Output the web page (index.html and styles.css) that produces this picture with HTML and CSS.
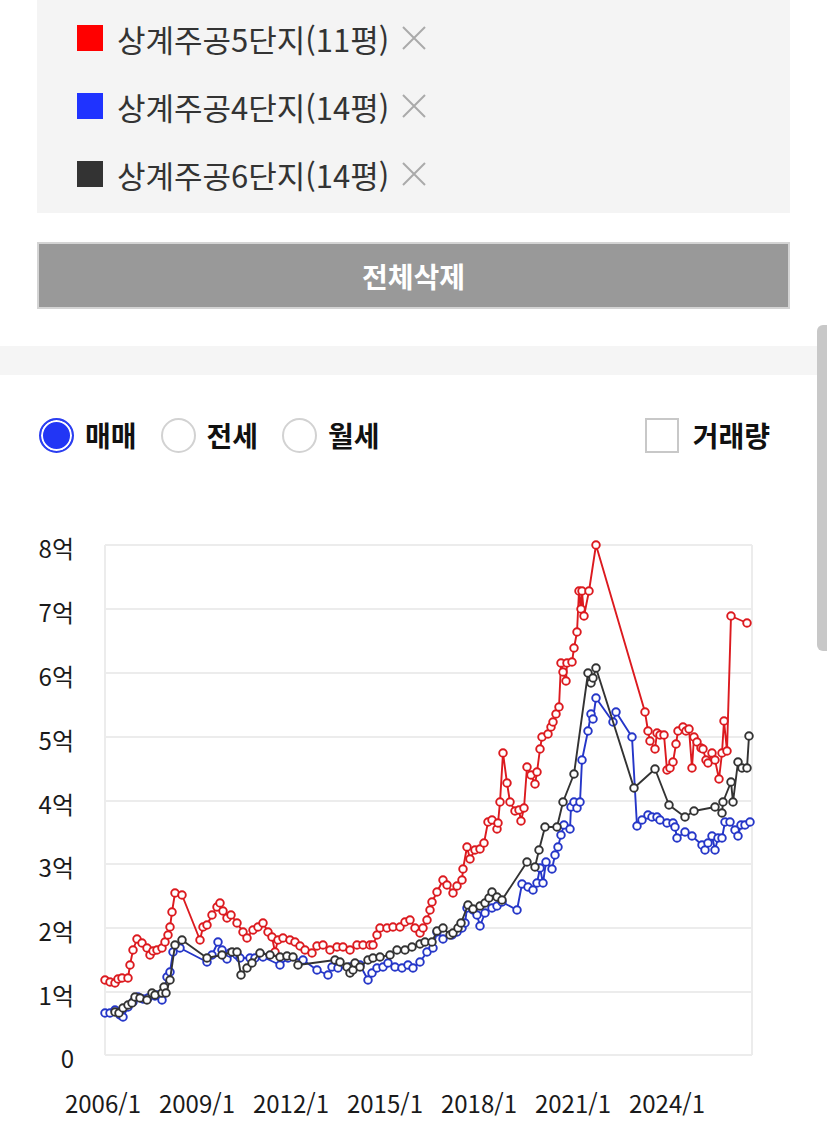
FILE: index.html
```html
<!DOCTYPE html>
<html lang="ko">
<head>
<meta charset="utf-8">
<title>시세 비교</title>
<link rel="stylesheet" href="styles.css">
</head>
<body>
<div class="filters">
  <ul class="picked">
    <li class="pick"><span class="swatch red"></span><span class="pick-name">상계주공5단지(11평)</span><button class="remove" type="button" aria-label="삭제"><svg viewBox="0 0 26 26" width="26" height="26"><path d="M2 2 L24 24 M24 2 L2 24"/></svg></button></li>
    <li class="pick"><span class="swatch blue"></span><span class="pick-name">상계주공4단지(14평)</span><button class="remove" type="button" aria-label="삭제"><svg viewBox="0 0 26 26" width="26" height="26"><path d="M2 2 L24 24 M24 2 L2 24"/></svg></button></li>
    <li class="pick"><span class="swatch dark"></span><span class="pick-name">상계주공6단지(14평)</span><button class="remove" type="button" aria-label="삭제"><svg viewBox="0 0 26 26" width="26" height="26"><path d="M2 2 L24 24 M24 2 L2 24"/></svg></button></li>
  </ul>
  <button class="clear-all" type="button">전체삭제</button>
</div>
<div class="divider"></div>
<section class="chart-panel">
  <div class="options">
    <div class="opt"><span class="radio checked"></span><span class="opt-label">매매</span></div>
    <div class="opt"><span class="radio"></span><span class="opt-label">전세</span></div>
    <div class="opt"><span class="radio"></span><span class="opt-label">월세</span></div>
    <div class="opt volume"><span class="checkbox"></span><span class="opt-label">거래량</span></div>
  </div>
  <svg class="chart" width="827" height="625" viewBox="0 500 827 625">
    <defs>
      <marker id="mr" viewBox="0 0 12 12" refX="6" refY="6" markerWidth="12" markerHeight="12" markerUnits="userSpaceOnUse"><circle cx="6" cy="6" r="3.8" fill="#fff" stroke="#dc1a1f" stroke-width="1.9"/></marker>
      <marker id="mb" viewBox="0 0 12 12" refX="6" refY="6" markerWidth="12" markerHeight="12" markerUnits="userSpaceOnUse"><circle cx="6" cy="6" r="3.8" fill="#fff" stroke="#2536c8" stroke-width="1.9"/></marker>
      <marker id="mk" viewBox="0 0 12 12" refX="6" refY="6" markerWidth="12" markerHeight="12" markerUnits="userSpaceOnUse"><circle cx="6" cy="6" r="3.8" fill="#fff" stroke="#333" stroke-width="1.9"/></marker>
    </defs>
    <g class="grid">
      <line x1="105" y1="545" x2="752" y2="545"/>
      <line x1="105" y1="609" x2="752" y2="609"/>
      <line x1="105" y1="673" x2="752" y2="673"/>
      <line x1="105" y1="737" x2="752" y2="737"/>
      <line x1="105" y1="801" x2="752" y2="801"/>
      <line x1="105" y1="864" x2="752" y2="864"/>
      <line x1="105" y1="928" x2="752" y2="928"/>
      <line x1="105" y1="992" x2="752" y2="992"/>
      <line x1="105" y1="1055" x2="752" y2="1055"/>
      <line x1="105" y1="545" x2="105" y2="1055"/>
      <line x1="752" y1="545" x2="752" y2="1055"/>
    </g>
    <g class="ylab">
      <text x="74" y="547">8억</text>
      <text x="74" y="611">7억</text>
      <text x="74" y="675">6억</text>
      <text x="74" y="739">5억</text>
      <text x="74" y="803">4억</text>
      <text x="74" y="866">3억</text>
      <text x="74" y="930">2억</text>
      <text x="74" y="994">1억</text>
      <text x="74" y="1057">0</text>
    </g>
    <g class="xlab">
      <text x="103" y="1102">2006/1</text>
      <text x="197" y="1102">2009/1</text>
      <text x="291" y="1102">2012/1</text>
      <text x="385" y="1102">2015/1</text>
      <text x="479" y="1102">2018/1</text>
      <text x="573" y="1102">2021/1</text>
      <text x="667" y="1102">2024/1</text>
    </g>
    <polyline class="series red" marker-start="url(#mr)" marker-mid="url(#mr)" marker-end="url(#mr)" points="105,980 110,982 115,983 118,979 122,978 128,978 130,965 133,950 137,939 142,943 147,948 150,955 153,951 157,950 162,948 165,942 168,935 170,927 172,912 175,893 182,895 200,940 203,927 207,925 212,915 217,907 220,903 223,911 227,918 231,915 237,923 243,932 247,938 253,930 258,927 263,923 268,932 272,937 275,952 278,940 283,938 290,940 295,942 300,946 305,950 312,953 317,946 323,945 330,950 337,947 343,947 350,950 357,945 363,945 370,945 373,945 377,935 380,928 387,928 393,927 400,927 405,922 410,920 415,928 420,933 423,928 427,920 430,910 432,902 437,892 443,880 447,885 453,893 457,886 462,880 463,869 467,847 470,859 475,850 480,849 484,843 488,822 492,820 497,829 498,823 500,802 503,753 507,783 510,802 515,811 519,810 521,821 524,808 527,767 531,775 535,784 537,772 540,749 542,737 548,734 551,727 553,722 556,714 559,707 561,663 563,672 566,681 567,663 572,662 574,648 577,632 579,591 581,609 582,591 584,616 589,591 596,545 645,712 648,731 650,741 655,749 657,733 660,735 664,735 667,770 670,768 673,762 676,744 678,731 683,727 686,731 689,729 692,768 694,737 697,742 701,748 703,749 706,760 708,763 712,753 715,760 719,779 722,753 724,721 727,751 731,616 747,623"/>
    <polyline class="series blue" marker-start="url(#mb)" marker-mid="url(#mb)" marker-end="url(#mb)" points="105,1013 110,1013 115,1010 120,1015 123,1017 128,1007 133,1002 138,997 143,999 148,998 155,996 158,995 162,1000 167,977 170,972 173,952 180,948 207,962 212,955 218,942 222,950 227,959 230,953 237,955 240,958 250,958 255,958 263,957 280,965 288,958 303,960 317,970 328,975 332,967 338,968 350,967 360,965 368,980 372,973 377,968 383,967 388,963 395,967 402,968 408,965 413,968 420,962 427,952 433,948 437,932 443,939 452,935 457,932 462,928 465,923 467,908 473,910 477,915 480,926 485,913 492,908 497,906 502,902 517,910 522,884 528,887 533,890 537,883 540,868 543,883 546,862 552,869 555,855 558,847 561,835 564,825 570,829 571,807 574,802 577,808 580,802 582,760 588,731 591,714 593,719 596,698 613,722 616,712 632,737 637,826 642,820 648,815 652,817 657,817 660,820 667,823 673,823 675,827 677,838 685,832 692,836 702,845 705,850 708,843 712,836 715,850 718,838 722,838 725,822 730,822 735,830 738,836 741,825 745,825 750,822"/>
    <polyline class="series dark" marker-start="url(#mk)" marker-mid="url(#mk)" marker-end="url(#mk)" points="115,1012 119,1013 123,1008 128,1005 132,1003 135,997 140,998 147,1000 152,993 155,995 162,993 164,987 166,993 170,980 175,945 182,940 207,958 222,955 232,952 237,952 241,975 247,968 252,963 260,953 270,955 280,957 287,956 293,957 298,965 335,960 340,962 347,967 350,973 353,970 355,963 360,967 368,960 373,958 380,957 390,955 397,950 405,950 412,947 420,944 425,942 432,942 437,931 443,928 450,935 453,933 458,928 461,923 468,905 473,909 480,906 485,903 489,898 492,892 497,897 502,900 527,862 535,867 539,850 545,827 557,827 563,802 574,774 588,673 591,683 593,678 596,668 634,788 655,769 669,805 685,817 694,811 715,807 722,813 723,802 731,782 733,802 738,762 742,768 747,768 749,736"/>
  </svg>
</section>
<div class="scrollbar"></div>
</body>
</html>
```
FILE: styles.css
```css
* { box-sizing: border-box; }
html, body { margin: 0; padding: 0; }
body {
  width: 827px;
  height: 1125px;
  overflow: hidden;
  background: #fff;
  font-family: "Noto Sans CJK KR", "Noto Sans", sans-serif;
  color: #222;
  position: relative;
}
.picked {
  list-style: none;
  margin: 0 37px;
  padding: 4px 0 5px;
  background: #f4f4f4;
}
.pick {
  height: 68px;
  display: flex;
  align-items: center;
  padding-left: 40px;
}
.swatch {
  width: 26px;
  height: 26px;
  margin-right: 14px;
  flex: none;
}
.swatch.red { background: #ff0000; }
.swatch.blue { background: #1f33ff; }
.swatch.dark { background: #333; }
.pick-name {
  font-size: 31px;
  color: #333;
  line-height: 1;
}
.remove {
  margin-left: 12px;
  padding: 0;
  border: 0;
  background: none;
  width: 26px;
  height: 26px;
  display: flex;
}
.remove path { stroke: #aaa; stroke-width: 2; fill: none; }
.clear-all {
  display: block;
  width: 753px;
  height: 67px;
  margin: 29px 37px 0;
  background: #999;
  border: 2px solid #d4d4d4;
  color: #fff;
  font-family: inherit;
  font-weight: 700;
  font-size: 28px;
  padding: 0;
}
.divider {
  margin-top: 37px;
  height: 29px;
  background: #f5f5f5;
}
.options {
  margin-top: 42px;
  height: 36px;
  display: flex;
  align-items: center;
  padding: 0 57px 0 39px;
}
.opt {
  display: flex;
  align-items: center;
  margin-right: 24px;
}
.opt.volume { margin-left: auto; margin-right: 0; }
.radio {
  width: 35px;
  height: 35px;
  border-radius: 50%;
  border: 2px solid #d2d2d2;
  background: #fff;
  margin-right: 11px;
}
.radio.checked {
  border-color: #2b3ef0;
  background: #2236f5;
  box-shadow: inset 0 0 0 2px #fff;
}
.checkbox {
  width: 34px;
  height: 35px;
  border: 2px solid #c8c8c8;
  background: #fff;
  margin-right: 14px;
}
.opt-label {
  font-size: 28px;
  font-weight: 700;
  color: #111;
  line-height: 1;
}
.chart {
  display: block;
  margin-top: 47px;
}
.grid line { stroke: #ececec; stroke-width: 2; }
.ylab text, .xlab text {
  font-family: "Noto Sans CJK KR", "Noto Sans", sans-serif;
  font-size: 24px;
  fill: #1a1a1a;
  dominant-baseline: central;
}
.ylab text { text-anchor: end; }
.xlab text { text-anchor: middle; }
.series { fill: none; stroke-width: 1.9; stroke-linejoin: round; }
.series.red { stroke: #dc1a1f; }
.series.blue { stroke: #2536c8; }
.series.dark { stroke: #333; }
.scrollbar {
  position: absolute;
  right: 0;
  top: 325px;
  width: 10px;
  height: 326px;
  background: #c8c8c8;
  border-radius: 6px 0 0 6px;
}
```
